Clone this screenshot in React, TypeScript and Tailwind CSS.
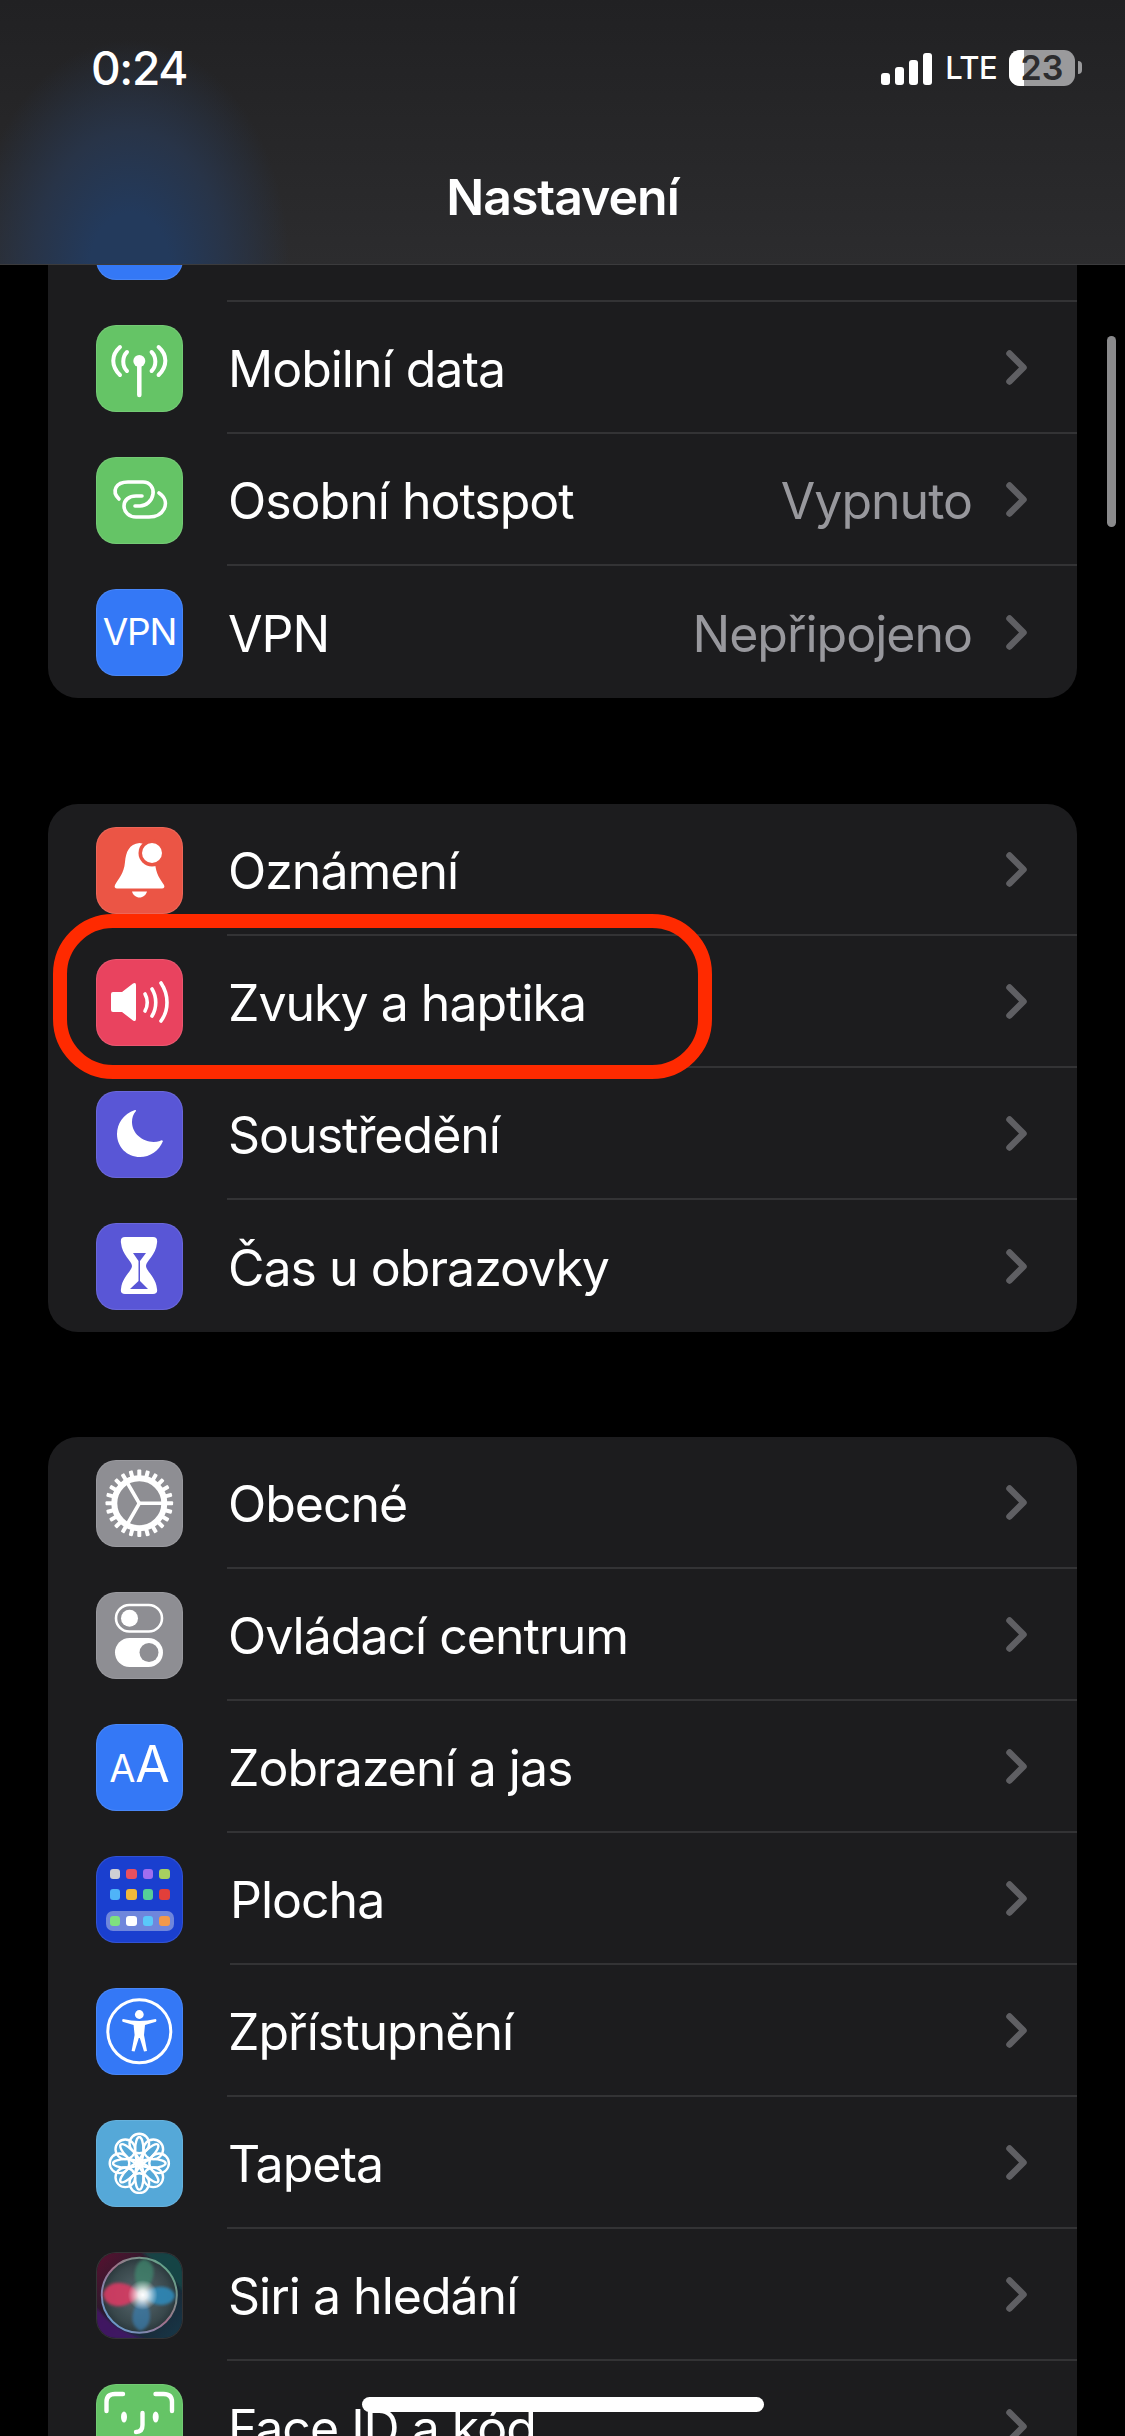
import type { ReactNode } from 'react';

const sf = 'font-["Inter","Liberation_Sans",sans-serif]';

function Glyph({ children }: { children: ReactNode }) {
  return (
    <svg viewBox="0 0 87 87" className="w-full h-full block">
      {children}
    </svg>
  );
}

function AntennaIcon() {
  return (
    <Glyph>
      <g fill="none" stroke="#fff" strokeWidth="4" strokeLinecap="round">
        <path d="M24 22 C15 30 15 41 24 50" />
        <path d="M31 27 C26 32 26 41 31 46" />
        <path d="M62.6 22 C71.6 30 71.6 41 62.6 50" />
        <path d="M55.6 27 C60.6 32 60.6 41 55.6 46" />
        <path d="M43.3 38 V70" strokeWidth="4.5" />
      </g>
      <circle cx="43.3" cy="36" r="6" fill="#fff" />
    </Glyph>
  );
}

function LinkIcon() {
  return (
    <Glyph>
      <g fill="none" stroke="#fff" strokeWidth="3.6" strokeLinecap="round" strokeLinejoin="round">
        <path d="M23 42 C15 34 20 25 32 25 L47 25 C54 25 58 31 57 37 C56 44 50 49 44 49 L39 49" />
        <path d="M63 36 C69 40 71 46 68 52 C65 58 59 60 53 60 L40 60 C33 60 28 55 28 49 C28 43 33 39 40 39 L46 39" />
      </g>
    </Glyph>
  );
}

function BellIcon() {
  return (
    <Glyph>
      <path
        fill="#fff"
        d="M43.5 16 C33 17 30 25 29 35 C28 47 22 52 19 58 C18 60 19 61.5 21 61.5 L66 61.5 C68 61.5 69 60 68 58 C64 52 60 47 59 36 C58 25 54 17 43.5 16 Z"
      />
      <path fill="#fff" d="M36 64.5 H51 C50 68 47 70.5 43.5 70.5 C40 70.5 37 68 36 64.5 Z" />
      <circle cx="56" cy="26" r="13.5" fill="#eb5545" />
      <circle cx="56" cy="26" r="10" fill="#fff" />
    </Glyph>
  );
}

function SpeakerIcon() {
  return (
    <Glyph>
      <path fill="#fff" d="M15 35 Q15 33 17 33 L26 33 L37 24.5 Q40 23 40 26 L40 60 Q40 63 37 61.5 L26 53 L17 53 Q15 53 15 51 Z" />
      <g fill="none" stroke="#fff" strokeWidth="3.6" strokeLinecap="round">
        <path d="M49 35 C52 40 52 47 49 52" />
        <path d="M56 30 C61 38 61 49 56 57" />
        <path d="M65 24 C73 36 73 51 65 62" />
      </g>
    </Glyph>
  );
}

function MoonIcon() {
  return (
    <Glyph>
      <path
        fill="#fff"
        d="M39 19 C27 23 21 33 21 43 C21 56 31 66 44 66 C54 66 63 60 67 50 C66 49 65 49 64 50 C50 54 36 44 36 31 C36 27 37 23 40 20 Q40 18.5 39 19 Z"
      />
    </Glyph>
  );
}

function HourglassIcon() {
  return (
    <Glyph>
      <path
        fill="#fff"
        d="M29 14 L57 14 Q62 14 61 20 C60 32 50 38 50 43 C50 48 60 54 61 66 Q62 71 57 71 L29 71 Q24 71 25 66 C26 54 36 48 36 43 C36 38 26 32 25 20 Q24 14 29 14 Z"
      />
      <path fill="#5956d6" d="M37 30 H50 L44 38 V58 L52 66 H34 L42.5 58 V38 Z" />
    </Glyph>
  );
}

function GearIcon() {
  const teeth = Array.from({ length: 24 }, (_, i) => i * 15);
  return (
    <Glyph>
      {teeth.map((a) => (
        <rect key={a} x="41.3" y="9.5" width="4" height="8" rx="1" fill="#fff" transform={`rotate(${a} 43.3 43.3)`} />
      ))}
      <circle cx="43.3" cy="43.3" r="25" fill="none" stroke="#fff" strokeWidth="6" />
      <g stroke="#fff" strokeWidth="3.6" strokeLinecap="round">
        <path d="M43.3 43.3 H66" />
        <path d="M43.3 43.3 L32 24" />
        <path d="M43.3 43.3 L32 63" />
      </g>
    </Glyph>
  );
}

function ToggleIcon() {
  return (
    <Glyph>
      <rect x="20" y="13" width="46" height="26.5" rx="13.25" fill="none" stroke="#fff" strokeWidth="2.6" />
      <circle cx="33.5" cy="26.2" r="8.5" fill="#fff" />
      <rect x="19" y="46" width="48" height="29" rx="14.5" fill="#fff" />
      <circle cx="53" cy="60.5" r="9.5" fill="#8e8e93" />
    </Glyph>
  );
}

function HomeIcon() {
  const rows = [
    ['bg-[#cfcfd4]', 'bg-[#e8505e]', 'bg-[#a06ef0]', 'bg-[#a8d060]'],
    ['bg-[#4fb4f8]', 'bg-[#f2b83c]', 'bg-[#55cf98]', 'bg-[#e23f3a]'],
  ];
  const dock = ['bg-[#7fe07f]', 'bg-white', 'bg-[#5ac8fa]', 'bg-[#f2994a]'];
  return (
    <div className="w-full h-full flex flex-col items-center pt-[13px]">
      {rows.map((row, i) => (
        <div key={i} className="flex gap-[6px] mb-[10px]">
          {row.map((c) => (
            <div key={c} className={`w-[10.5px] h-[10.5px] rounded-[3px] ${c}`} />
          ))}
        </div>
      ))}
      <div className="flex gap-[6px] px-[4px] py-[5px] mt-[1px] rounded-[7px] bg-[#6f86dc]">
        {dock.map((c) => (
          <div key={c} className={`w-[10.5px] h-[10.5px] rounded-[3px] ${c}`} />
        ))}
      </div>
    </div>
  );
}

function AccessIcon() {
  return (
    <Glyph>
      <circle cx="43.3" cy="43.3" r="31.5" fill="none" stroke="#fff" strokeWidth="3" />
      <circle cx="43.3" cy="26.5" r="4.4" fill="#fff" />
      <path fill="#fff" d="M27 31 Q43.3 35 59.6 31 Q61 31.5 60 33.8 L49 37 L48 47 L51 63 L48 63.5 L43.8 50 H42.8 L38.6 63.5 L35.6 63 L38.6 47 L37.6 37 L26.6 33.8 Q25.6 31.5 27 31 Z" />
    </Glyph>
  );
}

function FlowerIcon() {
  const angles = [0, 45, 90, 135, 180, 225, 270, 315];
  return (
    <Glyph>
      <g fill="none" stroke="#fff" strokeWidth="2.4">
        {angles.map((a) => (
          <g key={a} transform={`rotate(${a} 43.3 43.3)`}>
            <circle cx="43.3" cy="23.5" r="9.8" />
            <ellipse cx="43.3" cy="30" rx="4.2" ry="13" />
          </g>
        ))}
      </g>
      <circle cx="43.3" cy="43.3" r="4.8" fill="#fff" />
    </Glyph>
  );
}

function SiriIcon() {
  return (
    <svg viewBox="0 0 87 87" className="w-full h-full block">
      <defs>
        <linearGradient id="siriBg" x1="0" y1="0" x2="1" y2="1">
          <stop offset="0" stopColor="#5a1030" />
          <stop offset="0.5" stopColor="#1a1f2a" />
          <stop offset="1" stopColor="#17384a" />
        </linearGradient>
        <radialGradient id="siriOrb" cx="0.5" cy="0.5" r="0.5">
          <stop offset="0" stopColor="#5a6a70" />
          <stop offset="0.8" stopColor="#39484c" />
          <stop offset="1" stopColor="#2a383c" />
        </radialGradient>
        <linearGradient id="siriRim" x1="1" y1="0" x2="0" y2="1">
          <stop offset="0" stopColor="#4fb58a" />
          <stop offset="0.5" stopColor="#a0708a" />
          <stop offset="1" stopColor="#58a8e0" />
        </linearGradient>
        <radialGradient id="siriCore">
          <stop offset="0" stopColor="#ffffff" />
          <stop offset="0.3" stopColor="#ffffff" stopOpacity="0.85" />
          <stop offset="1" stopColor="#ffffff" stopOpacity="0" />
        </radialGradient>
        <filter id="siriBlur">
          <feGaussianBlur stdDeviation="1.6" />
        </filter>
      </defs>
      <rect width="87" height="87" fill="url(#siriBg)" />
      <path d="M0 87 L0 55 Q20 80 50 87 Z" fill="#4a1670" opacity="0.8" filter="url(#siriBlur)" />
      <path d="M87 0 L45 0 Q75 20 87 40 Z" fill="#124a48" opacity="0.9" filter="url(#siriBlur)" />
      <circle cx="43.3" cy="43.3" r="37.5" fill="url(#siriOrb)" stroke="url(#siriRim)" strokeWidth="2" />
      <path d="M44 43 C34 28 12 26 7 42 C9 58 32 58 44 43 Z" fill="#d83a64" opacity="0.9" filter="url(#siriBlur)" />
      <path d="M46 43 C56 32 76 32 79 44 C76 56 56 56 46 43 Z" fill="#2f88b8" opacity="0.9" filter="url(#siriBlur)" />
      <path d="M46 44 C38 54 30 70 44 79 C58 74 56 56 46 44 Z" fill="#3a7fb0" opacity="0.7" filter="url(#siriBlur)" />
      <path d="M46 42 C36 30 36 12 48 7 C64 12 58 32 46 42 Z" fill="#3f8a70" opacity="0.7" filter="url(#siriBlur)" />
      <circle cx="46.7" cy="43" r="15" fill="url(#siriCore)" />
    </svg>
  );
}

function FaceIcon() {
  return (
    <Glyph>
      <g fill="none" stroke="#fff" strokeWidth="4.4" strokeLinecap="round">
        <path d="M10.5 27 V18 Q10.5 10 19 10 H27" />
        <path d="M76 27 V18 Q76 10 67.5 10 H59.5" />
        <path d="M46.5 29 V41 Q46.5 48 40 48" />
      </g>
      <ellipse cx="28" cy="33" rx="3" ry="5.5" fill="#fff" />
      <ellipse cx="59.7" cy="33" rx="3" ry="5.5" fill="#fff" />
    </Glyph>
  );
}

function Chevron() {
  return (
    <svg viewBox="0 0 21 35" className="w-[21px] h-[35px] shrink-0">
      <path d="M3.5 3.5 L17.5 17.5 L3.5 31.5" fill="none" stroke="#5f5f63" strokeWidth="6.5" strokeLinecap="round" strokeLinejoin="round" />
    </svg>
  );
}

type RowProps = {
  label: string;
  value?: string;
  bg: string;
  icon: ReactNode;
  last?: boolean;
  wide?: boolean;
};

function Row({ label, value, bg, icon, last, wide }: RowProps) {
  return (
    <div className="flex items-center h-[132px] pl-[48px]">
      <div className={`w-[87px] h-[87px] shrink-0 rounded-[20px] overflow-hidden border border-white/10 ${bg}`}>
        <div className="-m-px w-[87px] h-[87px]">{icon}</div>
      </div>
      <div
        className={`flex-1 h-full flex items-center pr-[50px] ${wide ? 'ml-[47px]' : 'ml-[44px] pl-[1px]'} ${
          last ? '' : 'border-b-2 border-[#333335]'
        }`}
      >
        <span className="flex-1 pt-[4px] text-[50px] text-white tracking-[-0.02em]">{label}</span>
        {value && <span className="mr-[34px] pt-[4px] text-[50px] text-[#98989d] tracking-[-0.02em]">{value}</span>}
        <Chevron />
      </div>
    </div>
  );
}

function Card({ children, className }: { children: ReactNode; className?: string }) {
  return <div className={`mx-[48px] rounded-[30px] bg-[#1c1c1e] overflow-hidden ${className ?? ''}`}>{children}</div>;
}

function IconRows({ items }: { items: RowProps[] }) {
  return (
    <>
      {items.map((r) => (
        <Row key={r.label} {...r} />
      ))}
    </>
  );
}

const connect: RowProps[] = [
  { label: 'Bluetooth', value: 'Zapnuto', bg: 'bg-[#3478f6]', icon: null },
  { label: 'Mobilní data', bg: 'bg-[#65c466]', icon: <AntennaIcon /> },
  { label: 'Osobní hotspot', value: 'Vypnuto', bg: 'bg-[#65c466]', icon: <LinkIcon /> },
  {
    label: 'VPN',
    value: 'Nepřipojeno',
    bg: 'bg-[#3478f6]',
    last: true,
    icon: (
      <div className="w-full h-full flex items-center justify-center text-[37px] text-white tracking-[-0.03em]">VPN</div>
    ),
  },
];

const notify: RowProps[] = [
  { label: 'Oznámení', bg: 'bg-[#eb5545]', icon: <BellIcon /> },
  { label: 'Zvuky a haptika', bg: 'bg-[#e9435f]', icon: <SpeakerIcon /> },
  { label: 'Soustředění', bg: 'bg-[#5956d6]', icon: <MoonIcon /> },
  { label: 'Čas u obrazovky', bg: 'bg-[#5956d6]', icon: <HourglassIcon />, last: true },
];

const general: RowProps[] = [
  { label: 'Obecné', bg: 'bg-[#8e8e93]', icon: <GearIcon /> },
  { label: 'Ovládací centrum', bg: 'bg-[#8e8e93]', icon: <ToggleIcon /> },
  {
    label: 'Zobrazení a jas',
    bg: 'bg-[#3478f6]',
    icon: (
      <div className="w-full h-full flex items-baseline justify-center pt-[15px] text-white leading-none">
        <span className="text-[38px]">A</span>
        <span className="text-[50px]">A</span>
      </div>
    ),
  },
  { label: 'Plocha', bg: 'bg-[#1a3fcf]', icon: <HomeIcon />, wide: true },
  { label: 'Zpřístupnění', bg: 'bg-[#3478f6]', icon: <AccessIcon /> },
  { label: 'Tapeta', bg: 'bg-[#55a8d8]', icon: <FlowerIcon /> },
  { label: 'Siri a hledání', bg: 'bg-[#1c1c1e]', icon: <SiriIcon /> },
  { label: 'Face ID a kód', bg: 'bg-[#65c466]', icon: <FaceIcon /> },
];

function StatusIcons() {
  return (
    <div className="flex items-center">
      <div className="flex items-end gap-[5px] h-[32px] mt-[2px]">
        <div className="w-[9px] h-[12px] rounded-[3px] bg-white" />
        <div className="w-[9px] h-[18px] rounded-[3px] bg-white" />
        <div className="w-[9px] h-[25px] rounded-[3px] bg-white" />
        <div className="w-[9px] h-[32px] rounded-[3px] bg-white" />
      </div>
      <span className="ml-[13px] text-[31px] font-medium text-white leading-[36px] tracking-[-0.02em]">LTE</span>
      <div className="ml-[12px] relative w-[66px] h-[36px] rounded-[11px] bg-[#9a9a9c]">
        <div className="w-[15px] h-full rounded-l-[11px] bg-white" />
        <span className="absolute inset-0 flex items-center justify-center text-[34px] font-semibold text-[#2c2c2e] leading-[36px]">
          23
        </span>
      </div>
      <div className="ml-[3px] w-[4px] h-[13px] rounded-r-full bg-[#9a9a9c]" />
    </div>
  );
}

export default function App() {
  return (
    <div className={`relative w-[1125px] h-[2436px] overflow-hidden bg-black ${sf}`}>
      <div className="pt-[170px]">
        <Card>
          <IconRows items={connect} />
        </Card>
        <Card className="mt-[106px]">
          <IconRows items={notify} />
        </Card>
        <Card className="mt-[105px]">
          <IconRows items={general} />
        </Card>
      </div>

      {/* navigation bar sits over the scrolled list */}
      <div className="absolute top-0 inset-x-0 h-[265px] overflow-hidden border-b border-[#3b3b3d] bg-[linear-gradient(180deg,#212123,#2c2c2e)]">
        <div className="absolute left-[-30px] top-[40px] w-[320px] h-[460px] bg-[radial-gradient(closest-side,#233a5c_25%,#283448_60%,transparent_100%)]" />
        <div className="relative flex items-center justify-between pl-[91px] pr-[43px] pt-[45px] h-[90px]">
          <span className="text-[46px] font-medium text-white leading-none tracking-[-0.03em]">0:24</span>
          <StatusIcons />
        </div>
        <div className="relative mt-[82px] text-center text-[50px] font-semibold text-white leading-none tracking-[-0.02em]">
          Nastavení
        </div>
      </div>

      {/* scroll indicator */}
      <div className="absolute left-[1107px] top-[336px] w-[9px] h-[191px] rounded-full bg-[#8a8a8c]" />

      {/* red annotation round the Zvuky row */}
      <div className="absolute left-[53px] top-[914px] w-[659px] h-[165px] rounded-[60px] border-[14px] border-[#ff2a00]" />

      {/* home indicator */}
      <div className="absolute left-[362px] top-[2397px] w-[402px] h-[15px] rounded-full bg-white" />
    </div>
  );
}
